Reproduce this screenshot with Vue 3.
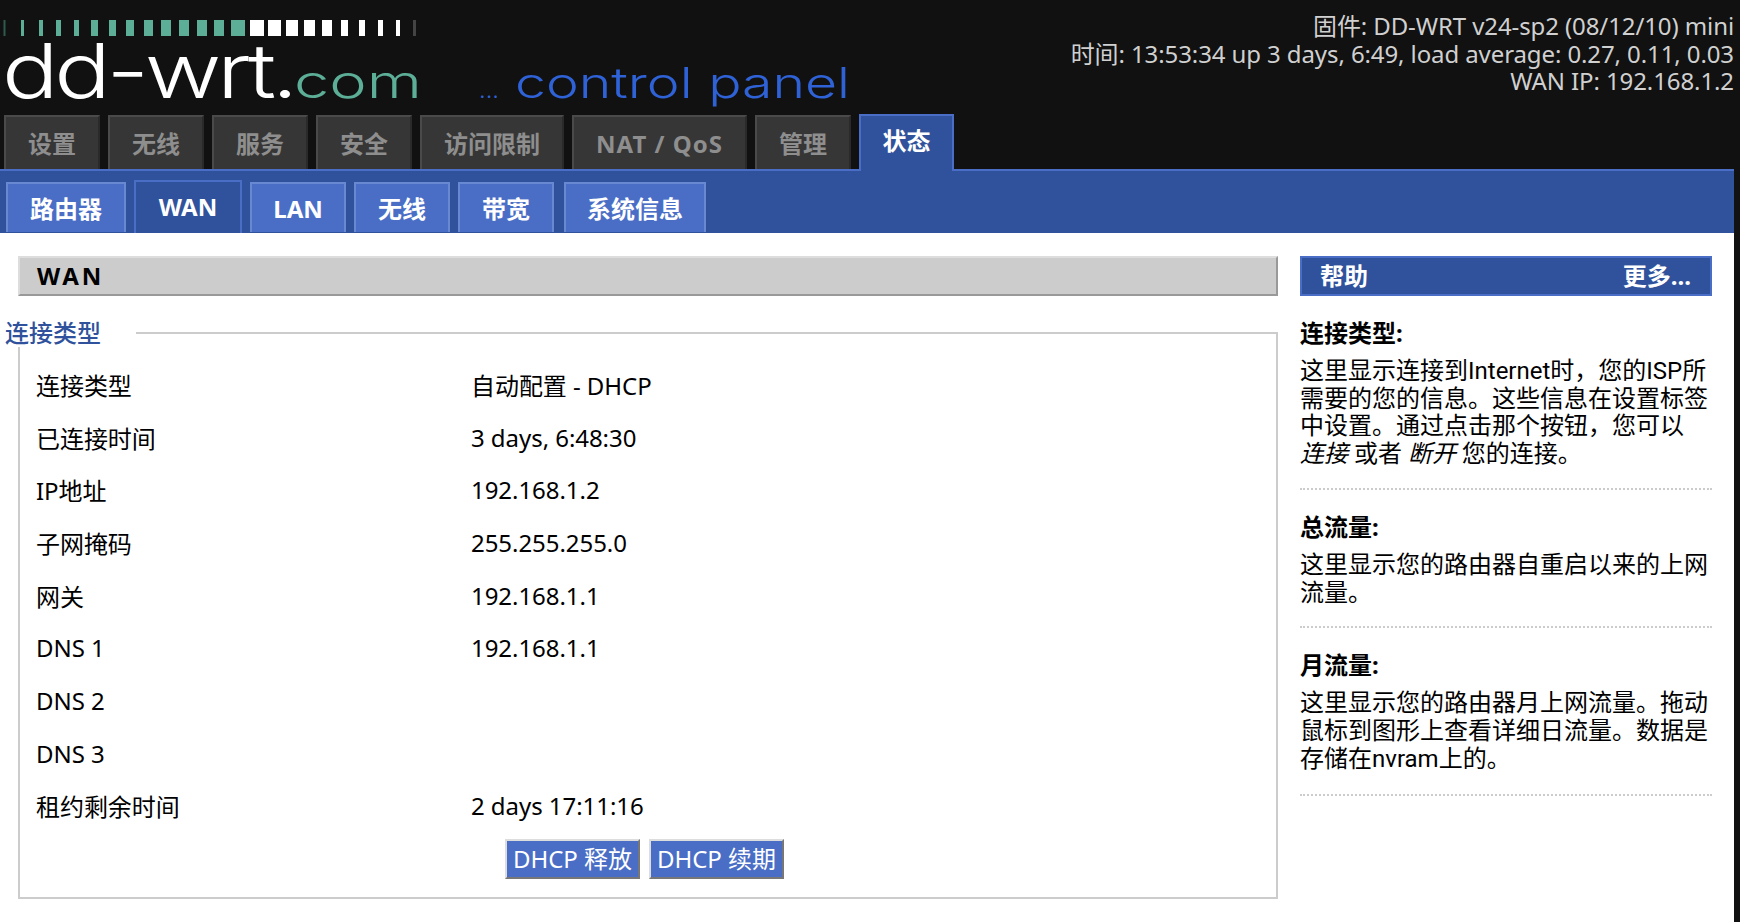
<script setup>
const teal = [[3.5, 2], [21, 3], [39, 4], [56, 5], [74, 5], [91, 7], [109, 7], [126, 8], [144, 9], [161, 10], [179, 10], [197, 10], [214, 10], [231, 14]]
const white = [[250, 14], [268, 13], [286, 12], [304, 11], [322, 10], [341, 7], [359, 6], [378, 5], [396, 4], [413, 3]]
const bars = [
  ...teal.map(([x, w], i) => ({ x, w, c: i === 0 ? '#2f5a50' : '#5cae97' })),
  ...white.map(([x, w], i) => ({ x, w, c: i === 9 ? '#444444' : '#ffffff' })),
]
const tabs = [
  { t: '设置' }, { t: '无线' }, { t: '服务' }, { t: '安全' }, { t: '访问限制' },
  { t: 'NAT / QoS', wide: true }, { t: '管理' }, { t: '状态', on: true },
]
const subs = [
  { t: '路由器' }, { t: 'WAN', on: true }, { t: 'LAN' }, { t: '无线' }, { t: '带宽' }, { t: '系统信息' },
]
const rows = [
  ['连接类型', '自动配置 - DHCP'],
  ['已连接时间', '3 days, 6:48:30'],
  ['IP地址', '192.168.1.2'],
  ['子网掩码', '255.255.255.0'],
  ['网关', '192.168.1.1'],
  ['DNS 1', '192.168.1.1'],
  ['DNS 2', ''],
  ['DNS 3', ''],
  ['租约剩余时间', '2 days 17:11:16'],
]
</script>

<template>
  <div class="page">
    <header class="top">
      <svg class="logo" width="880" height="114" viewBox="0 0 880 114">
        <rect v-for="(b, i) in bars" :key="i" :x="b.x" y="20" :width="b.w" height="16" :fill="b.c" />
        <text x="2" y="98" class="wm" font-size="76" textLength="292" lengthAdjust="spacingAndGlyphs" fill="#fff">dd-wrt.</text>
        <text x="294" y="98" class="wc" font-size="46" textLength="128" lengthAdjust="spacingAndGlyphs" fill="#5cae97">com</text>
        <text x="479" y="98" class="cp" font-size="24" textLength="20" lengthAdjust="spacingAndGlyphs" fill="#2f62d6">...</text>
        <text x="515" y="98" class="cp" font-size="42" textLength="335" lengthAdjust="spacingAndGlyphs" fill="#2f62d6">control panel</text>
      </svg>
      <div class="info">
        <div>固件: DD-WRT v24-sp2 (08/12/10) mini</div>
        <div>时间: 13:53:34 up 3 days, 6:49, load average: 0.27, 0.11, 0.03</div>
        <div>WAN IP: 192.168.1.2</div>
      </div>
    </header>

    <nav class="tabs">
      <a v-for="t in tabs" :key="t.t" class="tab" :class="{ on: t.on, wide: t.wide }">{{ t.t }}</a>
    </nav>

    <nav class="band">
      <a v-for="s in subs" :key="s.t" class="sub" :class="{ on: s.on }">{{ s.t }}</a>
    </nav>

    <main class="main">
      <section class="left">
        <h1 class="title">WAN</h1>
        <fieldset class="fs">
          <legend class="lg">连接类型</legend>
          <div v-for="r in rows" :key="r[0]" class="row">
            <span class="k">{{ r[0] }}</span>
            <span class="v">{{ r[1] }}</span>
          </div>
          <div class="btns">
            <button class="btn">DHCP 释放</button>
            <button class="btn">DHCP 续期</button>
          </div>
        </fieldset>
      </section>

      <aside class="help">
        <div class="hh"><span>帮助</span><span>更多...</span></div>
        <div class="hb">
          <h4>连接类型:</h4>
          <p>这里显示连接到Internet时，您的ISP所<br>需要的您的信息。这些信息在设置标签<br>中设置。通过点击那个按钮，您可以<br><em>连接</em> 或者 <em>断开</em> 您的连接。</p>
        </div>
        <div class="hb">
          <h4>总流量:</h4>
          <p>这里显示您的路由器自重启以来的上网<br>流量。</p>
        </div>
        <div class="hb">
          <h4>月流量:</h4>
          <p>这里显示您的路由器月上网流量。拖动<br>鼠标到图形上查看详细日流量。数据是<br>存储在nvram上的。</p>
        </div>
      </aside>
    </main>
  </div>
</template>

<style>
html, body { background: #111111; margin: 0; }
</style>

<style scoped>
.page {
  width: 1734px;
  height: 922px;
  background: #fff;
  overflow: hidden;
  font-family: "Noto Sans", "Noto Sans CJK SC", sans-serif;
  color: #000;
}
.top {
  width: 1740px;
  height: 114px;
  background: #111;
  display: flex;
  justify-content: space-between;
  box-sizing: border-box;
  padding-right: 6px;
}
.logo { display: block; flex: none; }
.wm { font-family: "Inter", sans-serif; font-weight: 300; letter-spacing: -3.5px; }
.wc { font-family: "Inter", sans-serif; font-weight: 300; }
.cp { font-family: "Inter", sans-serif; font-weight: 300; }
.info {
  padding-top: 12px;
  text-align: right;
  color: #d0d0d0;
  font-size: 24px;
  line-height: 27.5px;
  letter-spacing: -0.1px;
  white-space: nowrap;
}
.tabs {
  width: 1740px;
  height: 55px;
  background: #111;
  display: flex;
  align-items: flex-end;
  gap: 8px;
  padding-left: 4px;
  box-sizing: border-box;
}
.tab {
  box-sizing: border-box;
  height: 54px;
  padding: 0 22px;
  background: #363636;
  border: 2px solid #4a4a4a;
  border-bottom: 0;
  border-right-color: #2a2a2a;
  color: #8e8e8e;
  font-weight: 700;
  font-size: 24px;
  line-height: 54px;
  text-align: center;
}
.tab.wide { letter-spacing: 1px; }
.tab.on {
  height: 57px;
  padding: 0 21.5px;
  margin-bottom: -2px;
  position: relative;
  background: #30529c;
  border: 2px solid #4a6ec6;
  border-bottom: 0;
  color: #fff;
  line-height: 50px;
}
.band {
  width: 1734px;
  height: 64px;
  box-sizing: border-box;
  background: #30529c;
  border-top: 2px solid #4a6ec6;
  display: flex;
  align-items: flex-end;
  gap: 8px;
  padding-left: 6px;
}
.sub {
  box-sizing: border-box;
  height: 50px;
  width: 96px;
  margin-bottom: 1px;
  background: #4a6ec6;
  border: 2px solid #6888d2;
  border-bottom: 0;
  color: #fff;
  font-weight: 700;
  font-size: 24px;
  line-height: 49px;
  text-align: center;
}
.sub:first-child { width: 120px; }
.sub:last-child { width: 142px; margin-left: 2px; }
.sub.on {
  height: 53px;
  width: 108px;
  margin-bottom: 0;
  background: #30529c;
  border-color: #4a6ec6;
  line-height: 50px;
}
.main {
  display: flex;
  gap: 22px;
  padding: 23px 22px 0 18px;
}
.left { width: 1260px; flex: none; }
.title {
  box-sizing: border-box;
  margin: 0;
  height: 40px;
  background: #cccccc;
  border: 2px solid #dddddd;
  border-right-color: #999;
  border-bottom-color: #999;
  padding-left: 17px;
  font-size: 24px;
  line-height: 36px;
  letter-spacing: 3px;
  font-weight: 700;
}
.fs {
  margin: 23px 0 0;
  padding: 11px 16px 0;
  height: 580px;
  box-sizing: border-box;
  border: 2px solid #cccccc;
  min-width: 0;
}
.lg {
  margin-left: -31px;
  padding: 0 35px 0 0;
  background: #fff;
  color: #30529c;
  font-size: 24px;
  font-weight: 500;
  line-height: 28px;
}
.row {
  display: flex;
  height: 52.7px;
  align-items: center;
  font-size: 24px;
  letter-spacing: -0.05px;
}
.k { width: 435px; flex: none; }
.btns {
  display: flex;
  justify-content: center;
  gap: 9px;
  margin-top: 7px;
  padding-right: 7px;
}
.btn {
  box-sizing: border-box;
  width: 135px;
  height: 40px;
  padding: 0;
  background: #4a6ec6;
  border: 2px solid;
  border-color: #dddddd #777777 #777777 #dddddd;
  color: #fff;
  font-family: inherit;
  font-size: 24px;
  line-height: 34px;
  white-space: nowrap;
}
.help { width: 412px; flex: none; }
.hh {
  box-sizing: border-box;
  height: 40px;
  background: #30529c;
  border: 2px solid #4a6ec6;
  display: flex;
  justify-content: space-between;
  padding: 0 19px 0 18px;
  color: #fff;
  font-weight: 700;
  font-size: 24px;
  line-height: 36px;
}
.hb {
  border-bottom: 2px dotted #cccccc;
  padding-bottom: 19px;
  font-size: 24px;
  line-height: 27.7px;
}
.hb:last-child { padding-bottom: 21px; }
.hb h4 {
  margin: 23px 0 11px;
  font-size: 24px;
  font-weight: 700;
  line-height: 28px;
}
.hb p {
  margin: 0;
  font-family: Roboto, "Noto Sans CJK SC", sans-serif;
  white-space: nowrap;
}
</style>
